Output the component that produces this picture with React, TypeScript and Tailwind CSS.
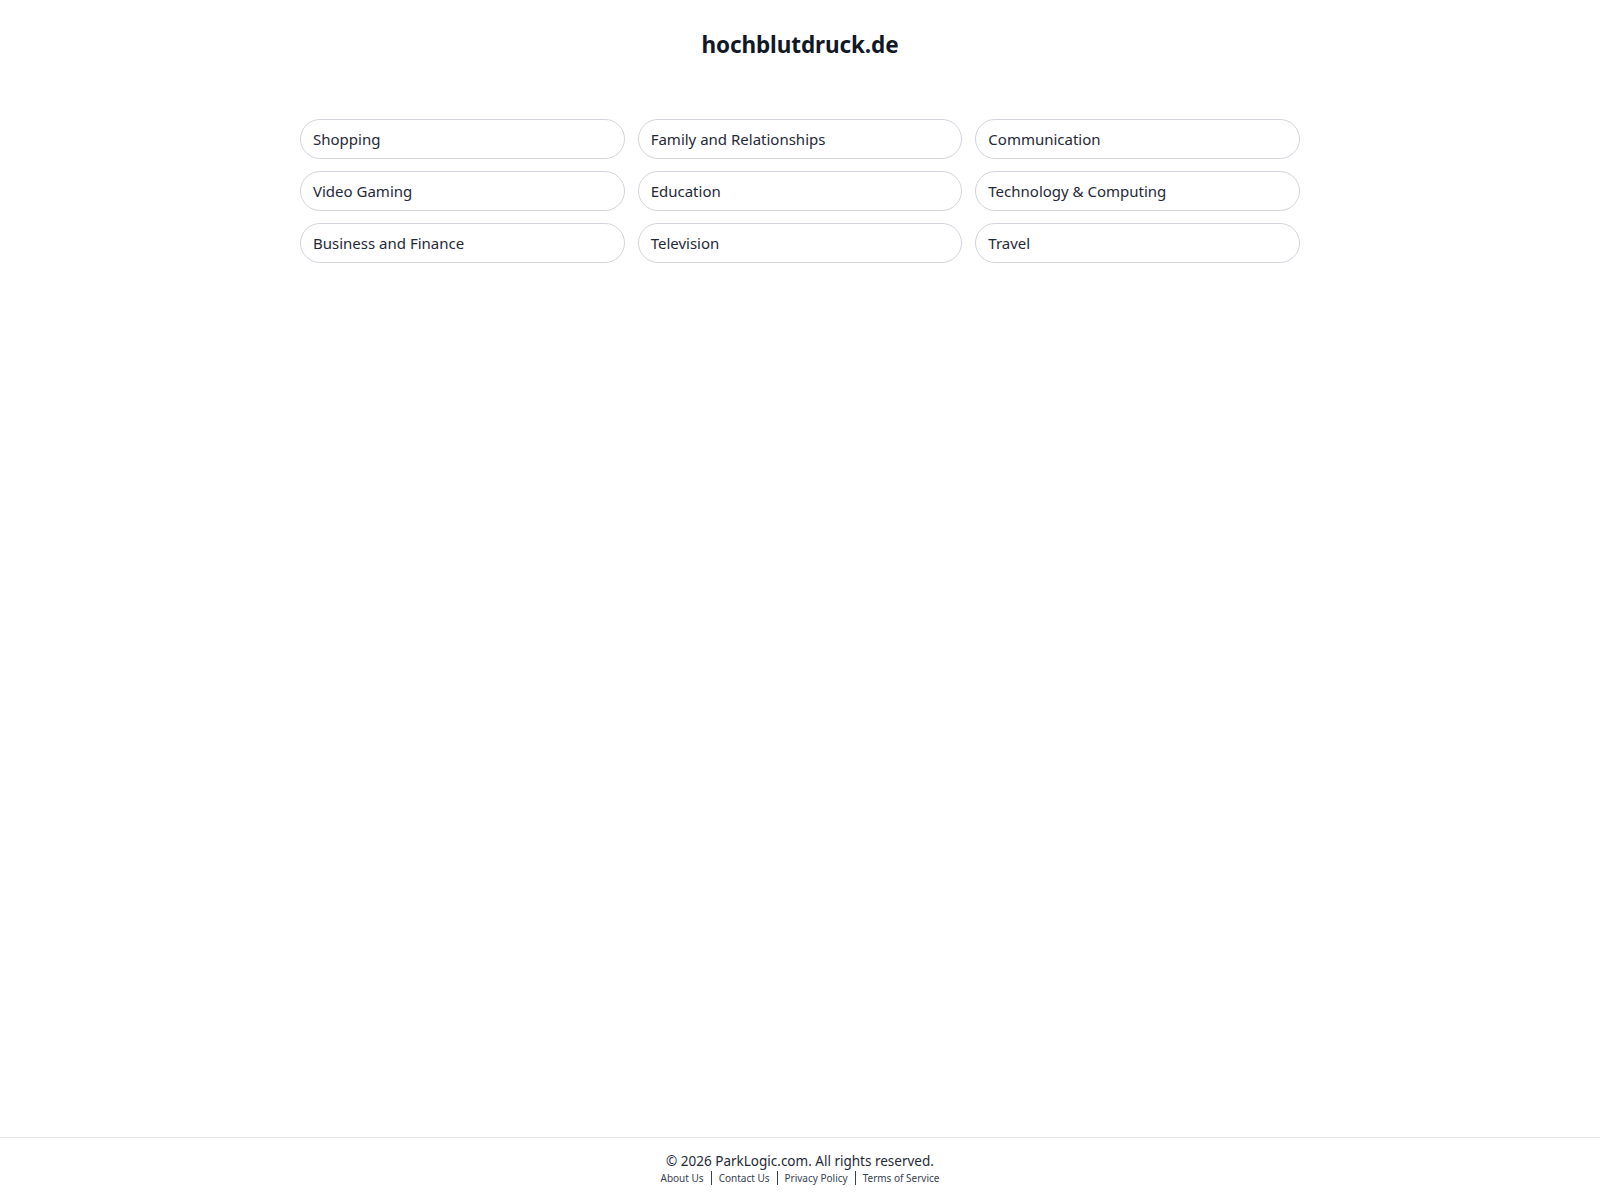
import React from 'react';

const categories = [
  'Shopping',
  'Family and Relationships',
  'Communication',
  'Video Gaming',
  'Education',
  'Technology & Computing',
  'Business and Finance',
  'Television',
  'Travel',
];

const footerLinks = ['About Us', 'Contact Us', 'Privacy Policy', 'Terms of Service'];

function App() {
  return (
    <div className="min-h-screen flex flex-col bg-white font-['Noto_Sans',sans-serif] text-[#1f2937]">
      {/* Header */}
      <header className="pt-[29px] text-center">
        <h1 className="text-[22.5px] leading-[32px] font-bold tracking-[-0.1px] text-[#111827]">hochblutdruck.de</h1>
      </header>

      {/* Category pills */}
      <main className="flex-1 pt-[58px]">
        <div className="w-[1000px] mx-auto grid grid-cols-3 gap-x-[13px] gap-y-[12px]">
          {categories.map((name) => (
            <a
              key={name}
              href="#"
              className="h-[40px] flex items-center px-[12px] border border-[#d1d5db] rounded-full text-[15px] text-[#1f2937] hover:bg-gray-50"
            >
              {name}
            </a>
          ))}
        </div>
      </main>

      {/* Footer */}
      <footer className="border-t border-[#e5e7eb] pt-[14px] pb-[15px] text-center">
        <p className="text-[13.5px] leading-[19px] text-[#1f2937]">© 2026 ParkLogic.com. All rights reserved.</p>
        <div className="flex justify-center items-center text-[10px] leading-[14px] text-[#374151]">
          {footerLinks.map((link, i) => (
            <a
              key={link}
              href="#"
              className={i === 0 ? 'px-[7px]' : 'px-[7px] border-l-[1.5px] border-[#374151]'}
            >
              {link}
            </a>
          ))}
        </div>
      </footer>
    </div>
  );
}

export default App;
